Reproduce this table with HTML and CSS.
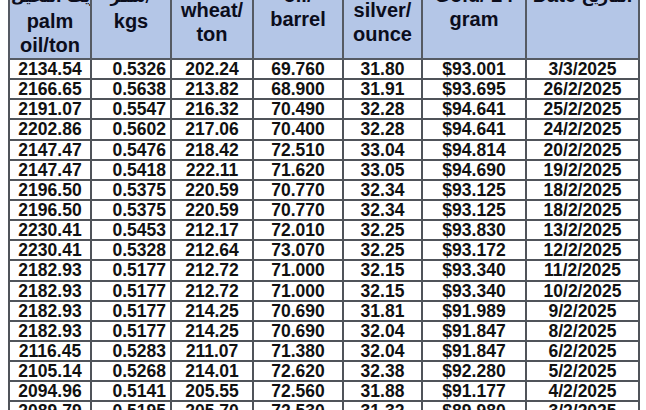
FILE: index.html
```html
<!DOCTYPE html>
<html lang="en">
<head>
<meta charset="utf-8">
<title>Prices</title>
<link rel="stylesheet" href="styles.css">
</head>
<body>
<div class="page">
<table class="prices">
<colgroup>
<col class="c1"><col class="c2"><col class="c3"><col class="c4"><col class="c5"><col class="c6"><col class="c7">
</colgroup>
<thead>
<tr>
<th><span class="ar" lang="ar">زيت النخيل/</span><br>palm<br>oil/ton</th>
<th><span class="ar" lang="ar">سكر/</span><br>kgs</th>
<th class="mid">wheat/<br>ton</th>
<th>oil/<br>barrel</th>
<th class="mid">silver/<br>ounce</th>
<th>Gold/ 24<br>gram</th>
<th>Date <span class="ar" lang="ar">التاريخ</span></th>
</tr>
</thead>
<tbody>
<tr><td>2134.54</td><td class="r">0.5326</td><td>202.24</td><td>69.760</td><td>31.80</td><td>$93.001</td><td>3/3/2025</td></tr>
<tr><td>2166.65</td><td class="r">0.5638</td><td>213.82</td><td>68.900</td><td>31.91</td><td>$93.695</td><td>26/2/2025</td></tr>
<tr><td>2191.07</td><td class="r">0.5547</td><td>216.32</td><td>70.490</td><td>32.28</td><td>$94.641</td><td>25/2/2025</td></tr>
<tr><td>2202.86</td><td class="r">0.5602</td><td>217.06</td><td>70.400</td><td>32.28</td><td>$94.641</td><td>24/2/2025</td></tr>
<tr><td>2147.47</td><td class="r">0.5476</td><td>218.42</td><td>72.510</td><td>33.04</td><td>$94.814</td><td>20/2/2025</td></tr>
<tr><td>2147.47</td><td class="r">0.5418</td><td>222.11</td><td>71.620</td><td>33.05</td><td>$94.690</td><td>19/2/2025</td></tr>
<tr><td>2196.50</td><td class="r">0.5375</td><td>220.59</td><td>70.770</td><td>32.34</td><td>$93.125</td><td>18/2/2025</td></tr>
<tr><td>2196.50</td><td class="r">0.5375</td><td>220.59</td><td>70.770</td><td>32.34</td><td>$93.125</td><td>18/2/2025</td></tr>
<tr><td>2230.41</td><td class="r">0.5453</td><td>212.17</td><td>72.010</td><td>32.25</td><td>$93.830</td><td>13/2/2025</td></tr>
<tr><td>2230.41</td><td class="r">0.5328</td><td>212.64</td><td>73.070</td><td>32.25</td><td>$93.172</td><td>12/2/2025</td></tr>
<tr><td>2182.93</td><td class="r">0.5177</td><td>212.72</td><td>71.000</td><td>32.15</td><td>$93.340</td><td>11/2/2025</td></tr>
<tr><td>2182.93</td><td class="r">0.5177</td><td>212.72</td><td>71.000</td><td>32.15</td><td>$93.340</td><td>10/2/2025</td></tr>
<tr><td>2182.93</td><td class="r">0.5177</td><td>214.25</td><td>70.690</td><td>31.81</td><td>$91.989</td><td>9/2/2025</td></tr>
<tr><td>2182.93</td><td class="r">0.5177</td><td>214.25</td><td>70.690</td><td>32.04</td><td>$91.847</td><td>8/2/2025</td></tr>
<tr><td>2116.45</td><td class="r">0.5283</td><td>211.07</td><td>71.380</td><td>32.04</td><td>$91.847</td><td>6/2/2025</td></tr>
<tr><td>2105.14</td><td class="r">0.5268</td><td>214.01</td><td>72.620</td><td>32.38</td><td>$92.280</td><td>5/2/2025</td></tr>
<tr><td>2094.96</td><td class="r">0.5141</td><td>205.55</td><td>72.560</td><td>31.88</td><td>$91.177</td><td>4/2/2025</td></tr>
<tr><td>2089.79</td><td class="r">0.5195</td><td>205.70</td><td>72.530</td><td>31.32</td><td>$89.980</td><td>3/2/2025</td></tr>
</tbody>
</table>
</div>
</body>
</html>
```
FILE: styles.css
```css
html, body {
  margin: 0;
  padding: 0;
  background: #ffffff;
}
body {
  width: 646px;
  height: 410px;
  overflow: hidden;
  font-family: "Liberation Sans", Arial, "Noto Sans", sans-serif;
}
.page {
  padding-left: 8px;
}
.prices {
  margin-top: -19px;
  border-collapse: collapse;
  table-layout: fixed;
  width: 630px;
  color: #111111;
}
.c1 { width: 82px; }
.c2 { width: 80px; }
.c3 { width: 82px; }
.c4 { width: 90px; }
.c5 { width: 79px; }
.c6 { width: 104px; }
.c7 { width: 113px; }

.prices th {
  background: #b4c6e7;
  border: 2px solid #555a63;
  font-size: 20px;
  line-height: 24px;
  font-weight: bold;
  color: #0b0d1c;
  vertical-align: top;
  text-align: center;
  padding: 0 1px;
  height: 77px;
  box-sizing: border-box;
  white-space: nowrap;
  overflow: hidden;
}
.prices th.mid {
  vertical-align: middle;
  padding-top: 3px;
}
.prices th .ar {
  font-family: "DejaVu Sans", "Noto Sans", sans-serif;
  font-size: 16px;
}
.prices td {
  border: 2px solid #50545a;
  font-size: 17.5px;
  font-weight: bold;
  line-height: 18px;
  height: 18.15px;
  padding: 0 4px;
  text-align: center;
  white-space: nowrap;
  vertical-align: middle;
  overflow: hidden;
}
.prices td.r {
  text-align: right;
}
```
